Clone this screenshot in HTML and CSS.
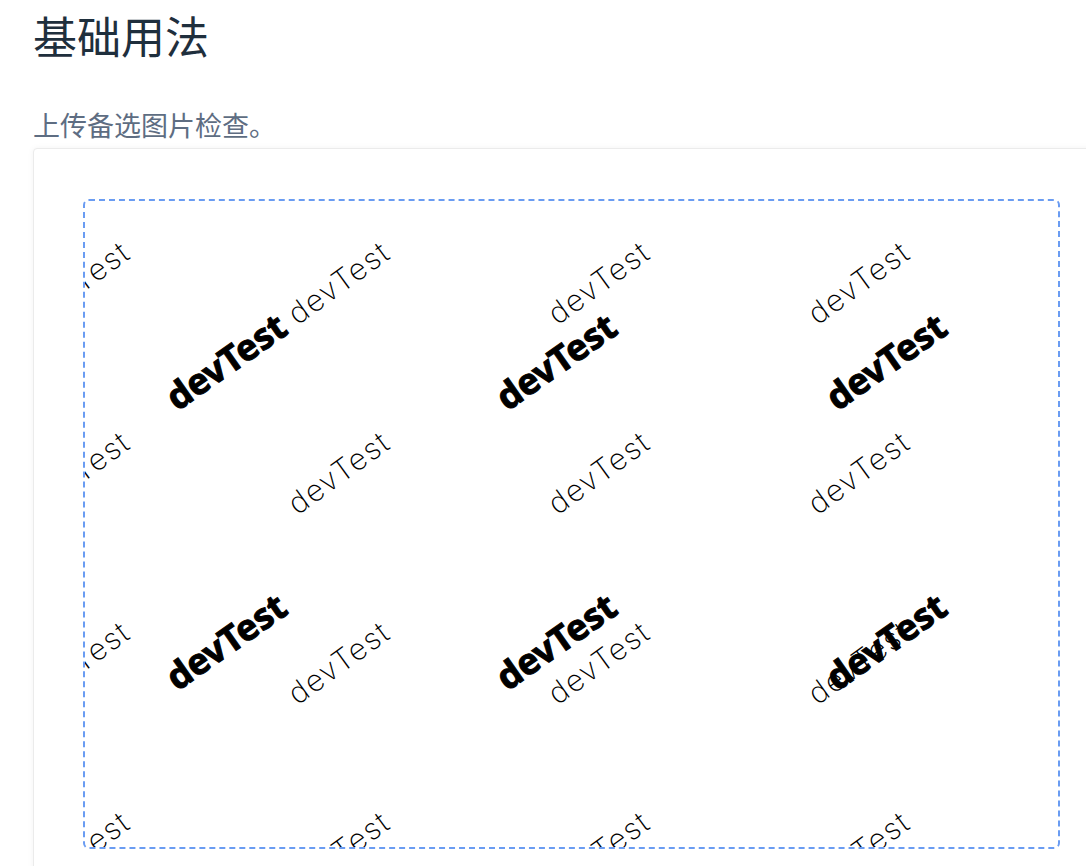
FILE: index.html
```html
<!DOCTYPE html>
<html lang="zh-CN">
<head>
<meta charset="utf-8">
<title>基础用法</title>
<link rel="stylesheet" href="styles.css">
</head>
<body>
  <h1 class="title">基础用法</h1>
  <p class="desc">上传备选图片检查。</p>
  <div class="card">
    <div class="canvas">
      <div class="wm wm-thin">
        <span>devTest</span><span>devTest</span><span>devTest</span><span>devTest</span>
        <span>devTest</span><span>devTest</span><span>devTest</span><span>devTest</span>
        <span>devTest</span><span>devTest</span><span>devTest</span><span>devTest</span>
        <span>devTest</span><span>devTest</span><span>devTest</span><span>devTest</span>
      </div>
      <div class="wm wm-bold">
        <span>devTest</span><span>devTest</span><span>devTest</span>
        <span>devTest</span><span>devTest</span><span>devTest</span>
      </div>
    </div>
  </div>
</body>
</html>
```
FILE: styles.css
```css
html {
  overflow: hidden;
}
body {
  margin: 0;
  padding: 0 0 0 33px;
  background: #ffffff;
  font-family: "Noto Sans CJK SC", "Noto Sans", sans-serif;
}
.title {
  margin: 2px 0 0;
  font-size: 44px;
  line-height: 66px;
  font-weight: 400;
  color: #1f2f3d;
}
.desc {
  margin: 37px 0 3px;
  font-size: 27px;
  line-height: 40px;
  color: #5e6d82;
}
.card {
  width: 1077px;
  box-sizing: border-box;
  padding: 50px 49px;
  border: 1px solid #ebebeb;
  border-radius: 4px;
  box-shadow: 0 0 6px rgba(0, 0, 0, 0.05);
  background: #fff;
}
.canvas {
  position: relative;
  box-sizing: border-box;
  width: 977px;
  height: 650px;
  border: 2px dashed #6a9cf2;
  border-radius: 6px;
  overflow: hidden;
}
.wm {
  position: absolute;
  display: grid;
  color: #000;
}
.wm span {
  display: block;
  white-space: nowrap;
}
.wm-thin {
  left: -48px;
  top: 99px;
  grid-template-columns: repeat(4, 260px);
  grid-template-rows: repeat(4, 190px);
  font-family: "Inter", "DejaVu Sans", sans-serif;
  font-weight: 200;
  font-size: 30px;
  line-height: 30px;
  letter-spacing: 1.5px;
}
.wm-thin span {
  height: 30px;
  transform-origin: 0 25px;
  transform: rotate(-36deg);
}
.wm-bold {
  left: 91px;
  top: 181px;
  grid-template-columns: repeat(3, 330px);
  grid-template-rows: repeat(2, 280px);
  font-family: "Noto Sans", "DejaVu Sans", sans-serif;
  font-weight: 700;
  font-size: 36px;
  line-height: 34px;
  -webkit-text-stroke: 1px #000;
}
.wm-bold span {
  height: 34px;
  transform-origin: 0 28px;
  transform: rotate(-35deg);
}
```
